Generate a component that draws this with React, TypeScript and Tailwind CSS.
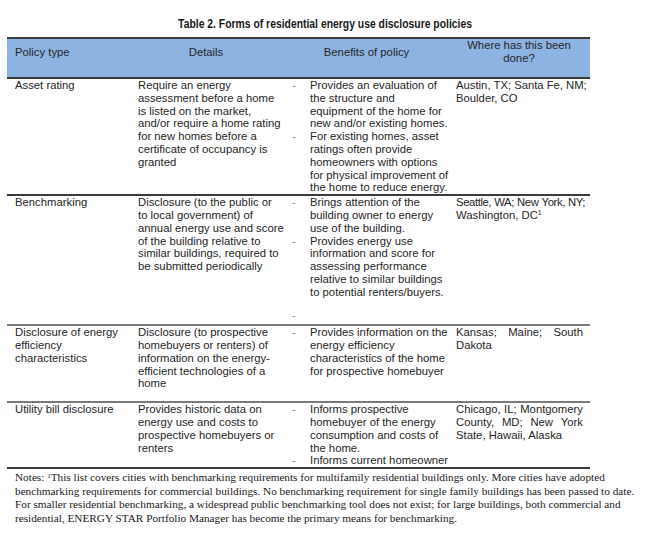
const body = "font-['Liberation_Sans',Arial,sans-serif] text-[11.3px] leading-[12.8px] text-[#262626]";

type Bullet = { lines: string[] };

const Lines = ({ lines }: { lines: string[] }) => (
  <>
    {lines.map((l, i) => (
      <div key={i} className="whitespace-nowrap">
        {l}
      </div>
    ))}
  </>
);

// spread words across the full cell width, like justified Word text
const Justified = ({ text, tight }: { text: string; tight?: boolean }) => (
  <div className={`flex justify-between gap-[3px] whitespace-nowrap ${tight ? "tracking-[-0.4px]" : ""}`}>
    {text.split(" ").map((w, i) => (
      <span key={i}>{w}</span>
    ))}
  </div>
);

const Benefits = ({ items, extraDash }: { items: Bullet[]; extraDash?: boolean }) => (
  <div className="pl-[7px]">
    {items.map((b, i) => (
      <div key={i} className="flex">
        <div className="w-[18px] shrink-0 text-[#8a8a8a]">-</div>
        <div>
          <Lines lines={b.lines} />
        </div>
      </div>
    ))}
    {extraDash && <div className="mt-[10px] text-[#8a8a8a]">-</div>}
  </div>
);

const cols = "grid grid-cols-[123px_155px_163px_142px]";

export default function App() {
  return (
    <div className="w-[650px] h-[537px] bg-white overflow-hidden">
      <div className="pt-[17px] h-[37px] text-center font-['Liberation_Sans',Arial,sans-serif] font-bold text-[12.5px] leading-[15px] text-[#1a1a1a]">
        <span className="inline-block scale-x-[0.83] whitespace-nowrap">
          Table 2. Forms of residential energy use disclosure policies
        </span>
      </div>

      <div className={`ml-[7px] w-[583px] ${body}`}>
        {/* header */}
        <div className={`${cols} h-[42px] bg-[#8db3e2] border-y-2 border-t-[#3a3a3a] border-b-[#3a3a3a]`}>
          <div className="pl-[8px] pt-[7px]">Policy type</div>
          <div className="pl-[8px] pr-[11px] pt-[7px] text-center">Details</div>
          <div className="pt-[7px] text-center">Benefits of policy</div>
          <div className="text-center pt-0">
            <div>Where has this been</div>
            <div>done?</div>
          </div>
        </div>

        {/* Asset rating */}
        <div className={`${cols} border-b-2 border-[#3a3a3a]`}>
          <div className="pl-[8px]">Asset rating</div>
          <div className="pl-[8px]">
            <Lines
              lines={[
                "Require an energy",
                "assessment before a home",
                "is listed on the market,",
                "and/or require a home rating",
                "for new homes before a",
                "certificate of occupancy is",
                "granted",
              ]}
            />
          </div>
          <Benefits
            items={[
              {
                lines: [
                  "Provides an evaluation of",
                  "the structure and",
                  "equipment of the home for",
                  "new and/or existing homes.",
                ],
              },
              {
                lines: [
                  "For existing homes, asset",
                  "ratings often provide",
                  "homeowners with options",
                  "for physical improvement of",
                  "the home to reduce energy.",
                ],
              },
            ]}
          />
          <div className="pl-[8px] pr-[7px]">
            <Justified text="Austin, TX; Santa Fe, NM;" />
            <div>Boulder, CO</div>
          </div>
        </div>

        {/* Benchmarking */}
        <div className={`${cols} h-[130px] border-b-2 border-[#7a7a7a]`}>
          <div className="pl-[8px]">Benchmarking</div>
          <div className="pl-[8px]">
            <Lines
              lines={[
                "Disclosure (to the public or",
                "to local government) of",
                "annual energy use and score",
                "of the building relative to",
                "similar buildings, required to",
                "be submitted periodically",
              ]}
            />
          </div>
          <Benefits
            extraDash
            items={[
              {
                lines: [
                  "Brings attention of the",
                  "building owner to energy",
                  "use of the building.",
                ],
              },
              {
                lines: [
                  "Provides energy use",
                  "information and score for",
                  "assessing performance",
                  "relative to similar buildings",
                  "to potential renters/buyers.",
                ],
              },
            ]}
          />
          <div className="pl-[8px] pr-[5px]">
            <Justified tight text="Seattle, WA; New York, NY;" />
            <div>
              Washington, DC<sup className="text-[7px]">1</sup>
            </div>
          </div>
        </div>

        {/* Disclosure of energy efficiency characteristics */}
        <div className={`${cols} h-[77px] border-b-2 border-[#7a7a7a]`}>
          <div className="pl-[8px]">
            <Lines lines={["Disclosure of energy", "efficiency", "characteristics"]} />
          </div>
          <div className="pl-[8px]">
            <Lines
              lines={[
                "Disclosure (to prospective",
                "homebuyers or renters) of",
                "information on the energy-",
                "efficient technologies of a",
                "home",
              ]}
            />
          </div>
          <Benefits
            items={[
              {
                lines: [
                  "Provides information on the",
                  "energy efficiency",
                  "characteristics of the home",
                  "for prospective homebuyer",
                ],
              },
            ]}
          />
          <div className="pl-[8px] pr-[7px]">
            <Justified text="Kansas; Maine; South" />
            <div>Dakota</div>
          </div>
        </div>

        {/* Utility bill disclosure */}
        <div className={`${cols} border-b-2 border-[#3a3a3a]`}>
          <div className="pl-[8px]">Utility bill disclosure</div>
          <div className="pl-[8px]">
            <Lines
              lines={[
                "Provides historic data on",
                "energy use and costs to",
                "prospective homebuyers or",
                "renters",
              ]}
            />
          </div>
          <Benefits
            items={[
              {
                lines: [
                  "Informs prospective",
                  "homebuyer of the energy",
                  "consumption and costs of",
                  "the home.",
                ],
              },
              { lines: ["Informs current homeowner"] },
            ]}
          />
          <div className="pl-[8px] pr-[7px]">
            <Justified text="Chicago, IL; Montgomery" />
            <Justified text="County, MD; New York" />
            <div>State, Hawaii, Alaska</div>
          </div>
        </div>
      </div>

      {/* notes */}
      <div className="mt-[2px] pl-[15px] font-['Liberation_Serif','Times_New_Roman',serif] text-[11.25px] leading-[13.5px] text-[#1a1a1a]">
        <div className="whitespace-nowrap">
          Notes: <sup className="text-[7px]">1</sup>This list covers cities with benchmarking requirements for multifamily
          residential buildings only. More cities have adopted
        </div>
        <div className="whitespace-nowrap">
          benchmarking requirements for commercial buildings. No benchmarking requirement for single family buildings has
          been passed to date.
        </div>
        <div className="whitespace-nowrap">
          For smaller residential benchmarking, a widespread public benchmarking tool does not exist; for large buildings,
          both commercial and
        </div>
        <div className="whitespace-nowrap">
          residential, ENERGY STAR Portfolio Manager has become the primary means for benchmarking.
        </div>
      </div>
    </div>
  );
}
